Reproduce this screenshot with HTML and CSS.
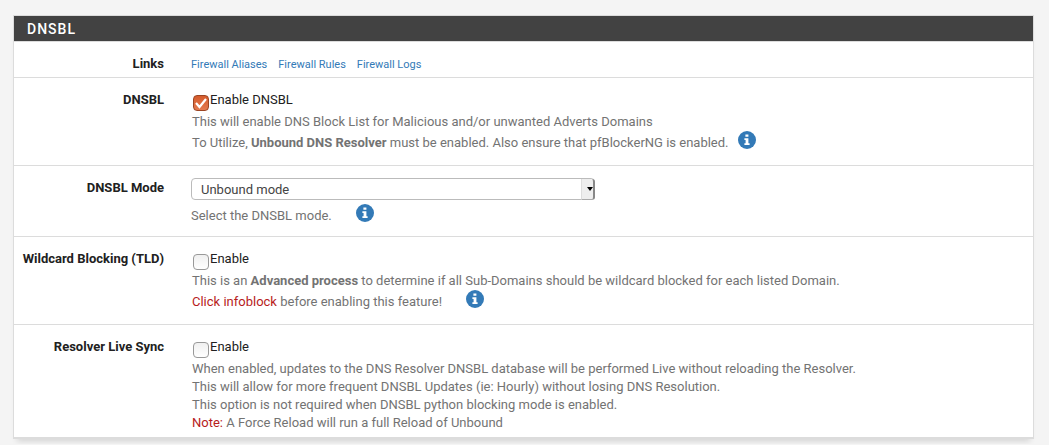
FILE: index.html
```html
<!DOCTYPE html>
<html lang="en">
<head>
<meta charset="utf-8">
<title>DNSBL</title>
<link rel="stylesheet" href="styles.css">
</head>
<body>
<svg class="sprite" aria-hidden="true">
  <symbol id="info" viewBox="0 0 18 18">
    <circle cx="9" cy="9" r="9" fill="#337ab7"/>
    <path d="M7.4 3.5h3v2.3h-3zM6.4 7.2h4v5h1.2v1.8H6.4v-1.8h1.2V9H6.4z" fill="#fff"/>
  </symbol>
</svg>
<form class="panel">
  <h2 class="panel-heading">DNSBL</h2>
  <div class="row row-links">
    <span class="label">Links</span>
    <nav class="links">
      <a href="#aliases">Firewall Aliases</a>
      <a href="#rules">Firewall Rules</a>
      <a href="#logs">Firewall Logs</a>
    </nav>
  </div>
  <div class="row">
    <span class="label">DNSBL</span>
    <div class="field">
      <label class="check"><input type="checkbox" checked>Enable DNSBL</label>
      <p class="help">This will enable DNS Block List for Malicious and/or unwanted Adverts Domains</p>
      <p class="help help-info">To Utilize, <strong>Unbound DNS Resolver</strong> must be enabled. Also ensure that pfBlockerNG is enabled.<button class="info" type="button" aria-label="More information"><svg><use href="#info"/></svg></button></p>
    </div>
  </div>
  <div class="row row-select">
    <label class="label" for="mode">DNSBL Mode</label>
    <div class="field field-select">
      <div class="select"><select id="mode"><option>Unbound mode</option></select></div>
      <p class="help help-info">Select the DNSBL mode.<button class="info info-far" type="button" aria-label="More information"><svg><use href="#info"/></svg></button></p>
    </div>
  </div>
  <div class="row">
    <span class="label">Wildcard Blocking (TLD)</span>
    <div class="field">
      <label class="check"><input type="checkbox">Enable</label>
      <p class="help">This is an <strong>Advanced process</strong> to determine if all Sub-Domains should be wildcard blocked for each listed Domain.</p>
      <p class="help help-info"><span class="danger">Click infoblock</span> before enabling this feature!<button class="info info-far" type="button" aria-label="More information"><svg><use href="#info"/></svg></button></p>
    </div>
  </div>
  <div class="row row-last">
    <span class="label">Resolver Live Sync</span>
    <div class="field">
      <label class="check"><input type="checkbox">Enable</label>
      <p class="help">When enabled, updates to the DNS Resolver DNSBL database will be performed Live without reloading the Resolver.<br>This will allow for more frequent DNSBL Updates (ie: Hourly) without losing DNS Resolution.<br>This option is not required when DNSBL python blocking mode is enabled.<br><span class="danger">Note:</span> A Force Reload will run a full Reload of Unbound</p>
    </div>
  </div>
</form>
</body>
</html>
```
FILE: styles.css
```css
* { box-sizing: border-box; }
body {
  margin: 0;
  padding: 15px 15px 5px 13px;
  background: #f4f4f4;
  color: #212121;
  font: 13px/18px Roboto, "Liberation Sans", sans-serif;
}
.sprite { display: none; }
.panel {
  background: #fff;
  border: 1px solid #dcdcdc;
  border-bottom-width: 2px;
  box-shadow: 0 6px 6px -4px rgba(0, 0, 0, .14);
}
.panel-heading {
  margin: 0;
  padding: 4px 13px 3px;
  background: #424242;
  color: #fff;
  font-size: 14px;
  font-weight: 500;
  line-height: 18px;
  letter-spacing: 1px;
}
.row {
  display: grid;
  grid-template-columns: 150px 1fr;
  column-gap: 27px;
  padding: 13px 0 10px;
  border-top: 1px solid #dcdcdc;
}
.row-links { padding-bottom: 3px; }
.row-select { padding: 12px 0 8px; }
.row-last { padding-bottom: 5px; }
.label {
  font-weight: 700;
  text-align: right;
  white-space: nowrap;
}
.row-select .label { padding-top: 1px; }
.links {
  display: flex;
  gap: 11px;
  padding-top: 1px;
  font-size: 11px;
}
a { color: #337ab7; text-decoration: none; }
.field { padding-left: 1px; }
.field-select { padding-left: 0; }
.check {
  display: flex;
  width: fit-content;
  margin-bottom: 4px;
}
.check input {
  appearance: none;
  width: 16px;
  height: 16px;
  margin: 4px 1px -2px 1px;
  border: 1px solid #999;
  border-radius: 4px;
  background: linear-gradient(#f0f0f0, #fff);
}
.check input:checked {
  border-color: #9c4524;
  background: url("data:image/svg+xml,%3Csvg xmlns='http://www.w3.org/2000/svg' viewBox='0 0 14 14'%3E%3Cpath d='M2 7 5.5 11 12 3' fill='none' stroke='white' stroke-width='2.2'/%3E%3C/svg%3E"), linear-gradient(#d55b2c, #e47b50);
}
.help { margin: 0; color: #737373; }
.help-info {
  display: flex;
  align-items: center;
  height: 24px;
  white-space: pre-wrap;
}
.info {
  width: 18px;
  height: 18px;
  margin: 0 0 6px 9px;
  padding: 0;
  border: 0;
  background: none;
}
.info-far { margin-left: 24px; }
.info svg { display: block; width: 18px; height: 18px; }
.danger { color: #b71c1c; }
.select {
  position: relative;
  width: 48%;
  max-width: 405px;
  margin-bottom: 4px;
}
.select select {
  appearance: none;
  display: block;
  width: 100%;
  height: 22px;
  padding: 1px 20px 0 9px;
  border: 1px solid #bbb;
  border-radius: 4px;
  background: #fff;
  color: #444;
  font: inherit;
}
.select::after {
  content: "";
  position: absolute;
  top: 1px;
  right: 0;
  width: 11px;
  height: 20px;
  border: 1px solid #ddd;
  border-width: 0 2px 1px 1px;
  border-right-color: #888;
  border-bottom-color: #aaa;
  border-radius: 0 3px 3px 0;
  background: #eee;
  pointer-events: none;
}
.select::before {
  content: "";
  position: absolute;
  z-index: 1;
  top: 9px;
  right: 2px;
  border: 3px solid transparent;
  border-top: 4px solid #000;
  border-bottom: 0;
  pointer-events: none;
}
```
